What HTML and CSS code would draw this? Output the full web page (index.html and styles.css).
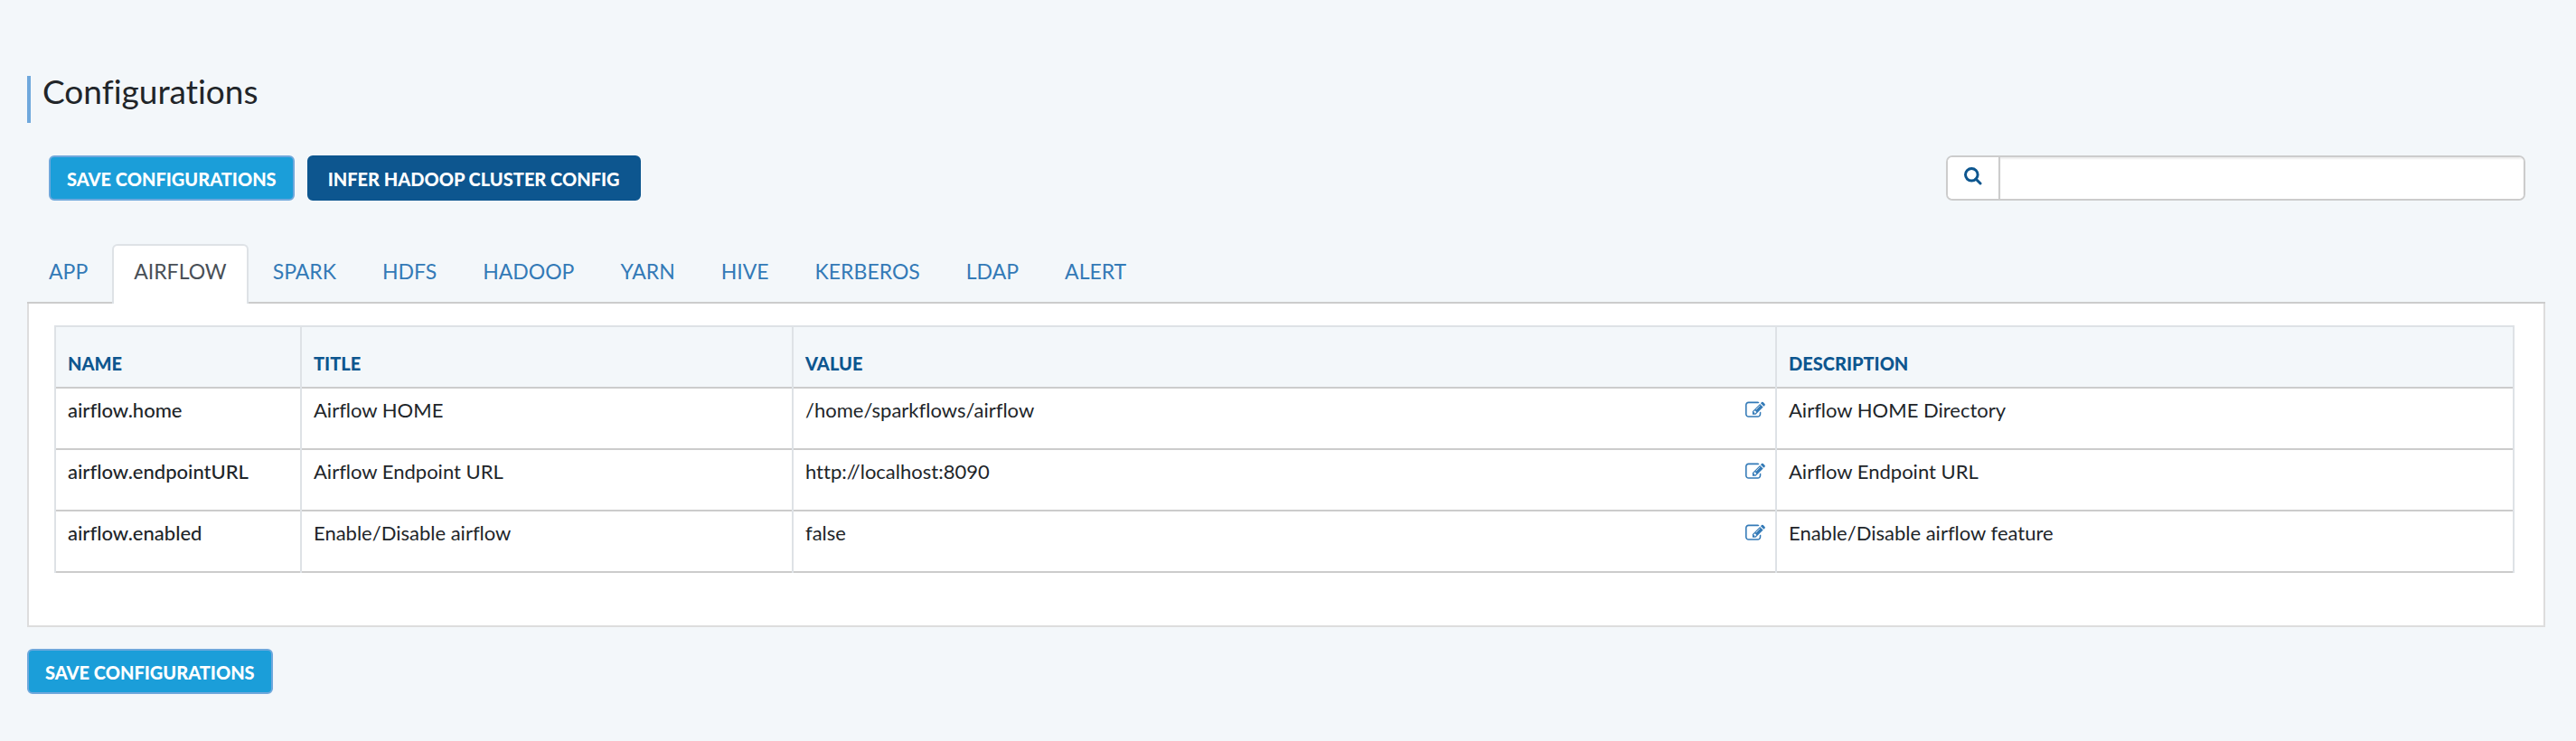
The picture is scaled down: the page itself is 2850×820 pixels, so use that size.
FILE: index.html
```html
<!DOCTYPE html>
<html lang="en">
<head>
<meta charset="utf-8">
<title>Configurations</title>
<link rel="stylesheet" href="styles.css">
</head>
<body>
<svg class="sprite" aria-hidden="true">
  <symbol id="edit" viewBox="0 0 1792 1792"><path d="M888 1184l116-116-152-152-116 116v56h96v96h56zm440-720q-16-16-33 1l-350 350q-17 17-1 33t33-1l350-350q17-17 1-33zm80 594v190q0 119-84.500 203.500t-203.500 84.500h-832q-119 0-203.500-84.500t-84.500-203.500v-832q0-119 84.500-203.500t203.500-84.500h832q63 0 117 25 15 7 18 23 3 17-9 29l-49 49q-14 14-32 8-23-6-45-6h-832q-66 0-113 47t-47 113v832q0 66 47 113t113 47h832q66 0 113-47t47-113v-126q0-13 9-22l64-64q15-15 35-7t20 29zm-96-738l288 288-672 672h-288v-288zm444 132l-92 92-288-288 92-92q28-28 68-28t68 28l152 152q28 28 28 68t-28 68z"/></symbol>
</svg>
<main class="page">
  <h1 class="title">Configurations</h1>
  <div class="toolbar">
    <button class="btn btn-save" type="button">SAVE CONFIGURATIONS</button>
    <button class="btn btn-infer" type="button">INFER HADOOP CLUSTER CONFIG</button>
    <form class="search">
      <button class="search-btn" type="button" aria-label="Search">
        <svg viewBox="0 0 20 20"><circle cx="8.300" cy="8.300" r="6.800"/><path d="M13 13l5 5"/></svg>
      </button>
      <input class="search-input" type="text" aria-label="Search configurations">
    </form>
  </div>
  <nav class="tabs">
    <a class="tab" href="#">APP</a>
    <a class="tab active" href="#">AIRFLOW</a>
    <a class="tab" href="#">SPARK</a>
    <a class="tab" href="#">HDFS</a>
    <a class="tab" href="#">HADOOP</a>
    <a class="tab" href="#">YARN</a>
    <a class="tab" href="#">HIVE</a>
    <a class="tab" href="#">KERBEROS</a>
    <a class="tab" href="#">LDAP</a>
    <a class="tab" href="#">ALERT</a>
  </nav>
  <section class="panel">
    <table class="config">
      <colgroup><col class="c-name"><col class="c-title"><col class="c-value"><col class="c-desc"></colgroup>
      <thead>
        <tr><th>NAME</th><th>TITLE</th><th>VALUE</th><th>DESCRIPTION</th></tr>
      </thead>
      <tbody>
        <tr>
          <td class="name">airflow.home</td><td>Airflow HOME</td>
          <td><div class="value"><span>/home/sparkflows/airflow</span><a class="edit" href="#" aria-label="Edit airflow.home"><svg><use href="#edit"/></svg></a></div></td>
          <td>Airflow HOME Directory</td>
        </tr>
        <tr>
          <td class="name">airflow.endpointURL</td><td>Airflow Endpoint URL</td>
          <td><div class="value"><span>http://localhost:8090</span><a class="edit" href="#" aria-label="Edit airflow.endpointURL"><svg><use href="#edit"/></svg></a></div></td>
          <td>Airflow Endpoint URL</td>
        </tr>
        <tr>
          <td class="name">airflow.enabled</td><td>Enable/Disable airflow</td>
          <td><div class="value"><span>false</span><a class="edit" href="#" aria-label="Edit airflow.enabled"><svg><use href="#edit"/></svg></a></div></td>
          <td>Enable/Disable airflow feature</td>
        </tr>
      </tbody>
    </table>
  </section>
  <button class="btn btn-save" type="button">SAVE CONFIGURATIONS</button>
</main>
</body>
</html>
```
FILE: styles.css
```css
* { box-sizing: border-box; }

body {
  margin: 0;
  background: #f3f7fa;
  color: #212529;
  font-family: Lato, "Open Sans", sans-serif;
  font-size: 22px;
  font-variant-ligatures: none;
  line-height: 32px;
}

.sprite { display: none; }

.page { padding: 84px 34px 52px 30px; }

.title {
  margin: 0 0 36px;
  padding: 0 0 18px 13px;
  border-left: 4px solid #6fa8dc;
  font-size: 37px;
  font-weight: 400;
  line-height: 34px;
}

.toolbar {
  display: flex;
  gap: 14px;
  padding: 0 22px 0 24px;
}

.btn {
  height: 50px;
  padding: 2px 18px 0;
  border: 2px solid;
  border-radius: 6px;
  color: #fff;
  font: 900 20px/44px Lato, "Open Sans", sans-serif;
  white-space: nowrap;
}
.btn-save { background: #1b9ed9; border-color: #6fa8dc; }
.btn-infer { padding: 2px 21px 0; background: #0d568f; border-color: #0d568f; }

.search {
  display: flex;
  width: 23.4%;
  height: 50px;
  margin-left: auto;
  border: 2px solid #ccc;
  border-radius: 7px;
  background: #fff;
  overflow: hidden;
}
.search-btn {
  display: flex;
  align-items: center;
  flex: none;
  width: 58px;
  padding: 0 18px 4px;
  border: 0;
  border-right: 2px solid #ccc;
  background: #fff;
}
.search-btn svg {
  width: 20px;
  height: 20px;
  fill: none;
  stroke: #0d568f;
  stroke-width: 3;
  stroke-linecap: round;
}
.search-input {
  flex: 1;
  min-width: 0;
  padding: 0 16px;
  border: 0;
  background: #fff;
  box-shadow: inset 0 2px 2px rgba(0, 0, 0, 0.07);
  font: inherit;
}

.tabs {
  display: flex;
  gap: 3px;
  margin-top: 48px;
  box-shadow: inset 0 -2px #ccc;
}
.tab {
  padding: 12px 22px 20px;
  border: 2px solid transparent;
  border-bottom: 0;
  border-radius: 6px 6px 0 0;
  color: #337ab7;
  font-size: 23px;
  text-decoration: none;
}
.tab.active {
  border-color: #dee2e6;
  background: #fff;
  color: #495057;
}

.panel {
  margin-bottom: 24px;
  padding: 24px 32px 58px 28px;
  border: 2px solid #ddd;
  border-top: 0;
  background: #fff;
}

.config {
  width: 100%;
  table-layout: fixed;
  border-spacing: 0;
  border-top: 2px solid #dee2e6;
  border-right: 2px solid #dee2e6;
}
.c-name { width: 10%; }
.c-title { width: 20%; }
.c-value { width: 40%; }
.c-desc { width: 30%; }

.config th,
.config td {
  height: 68px;
  border-left: 2px solid #dee2e6;
  box-shadow: inset 0 -2px #ccc;
  text-align: left;
}
.config th {
  padding: 24px 12px 12px 13px;
  background: #f3f7fa;
  color: #0d568f;
  font-size: 20px;
  font-weight: 900;
}
.config td {
  padding: 8px 11px 28px 13px;
}
.config .name { font-weight: 500; }

.value {
  display: flex;
  justify-content: space-between;
}
.edit {
  display: flex;
  align-items: center;
  color: #337ab7;
}
.edit svg {
  width: 22px;
  height: 22px;
  fill: currentColor;
}
```
